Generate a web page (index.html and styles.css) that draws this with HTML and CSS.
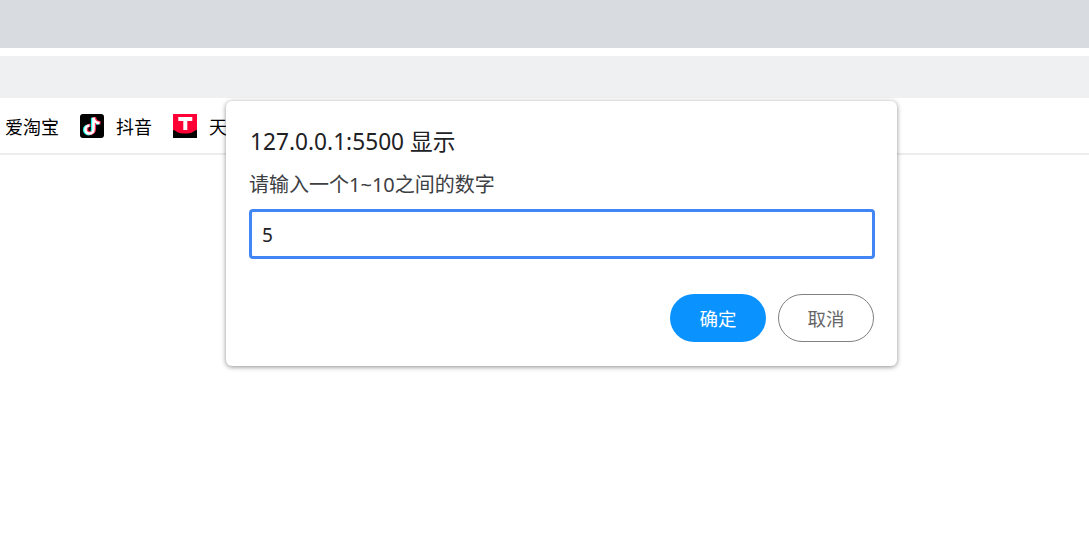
FILE: index.html
```html
<!doctype html>
<html lang="zh-CN">
  <head>
    <meta charset="utf-8">
    <title>127.0.0.1:5500</title>
    <link rel="stylesheet" href="styles.css">
  </head>
  <body>
    <div class="tabstrip"></div>
    <div class="toolbar"></div>
    <div class="bookmarks">
      <a class="bookmark">爱淘宝</a>
      <a class="bookmark">
        <svg class="favicon" viewBox="0 0 24 24">
          <rect width="24" height="24" rx="3" fill="#000"/>
          <path d="M13.500 3v12a4 4 0 1 1-4-4M13.500 3c.3 3.200 2.400 5.300 6 5.600" fill="none" stroke="#25f4ee" stroke-width="3.200" transform="translate(-1 .8)"/>
          <path d="M13.500 3v12a4 4 0 1 1-4-4M13.500 3c.3 3.200 2.400 5.300 6 5.600" fill="none" stroke="#fe2c55" stroke-width="3.200" transform="translate(1 .2)"/>
          <path d="M13.500 3v12a4 4 0 1 1-4-4M13.500 3c.3 3.200 2.400 5.300 6 5.600" fill="none" stroke="#fff" stroke-width="2.600" transform="translate(0 .5)"/>
        </svg>
        抖音
      </a>
      <a class="bookmark">
        <svg class="favicon" viewBox="0 0 24 24">
          <rect width="24" height="24" fill="#000"/>
          <path d="M0 0h24v16c-2 0-3 1-4 2-2 1-5 1.500-8 1.500s-6-.5-8-1.500c-1-1-2-2-4-2z" fill="#ff0036"/>
          <path d="M5.300 3h14v4h-5V16h-4V7h-5z" fill="#fff"/>
        </svg>
        天
      </a>
    </div>

    <div class="dialog">
      <h2 class="dialog-title">127.0.0.1:5500 显示</h2>
      <p class="dialog-msg">请输入一个1~10之间的数字</p>
      <div class="dialog-input">5</div>
      <div class="dialog-buttons">
        <button class="btn btn-ok">确定</button>
        <button class="btn btn-cancel">取消</button>
      </div>
    </div>
  </body>
</html>
```

FILE: styles.css
```css
* {
  box-sizing: border-box;
}
body {
  margin: 0;
  height: 534px;
  overflow: hidden;
  position: relative;
  background: white;
  font-family: "Noto Sans", "Noto Sans CJK SC", sans-serif;
}
.tabstrip {
  height: 48px;
  background: #d8dbe0;
}
.toolbar {
  height: 42px;
  margin-top: 8px;
  background: #eff0f2;
}
.bookmarks {
  height: 57px;
  display: flex;
  align-items: center;
  gap: 21px;
  padding-left: 5px;
  padding-top: 1px;
  border-bottom: 2px solid #ececec;
}
.bookmark {
  display: flex;
  align-items: center;
  gap: 12px;
  font-size: 18px;
  color: black;
}
.favicon {
  width: 24px;
  height: 24px;
}
.dialog {
  position: absolute;
  top: 101px;
  left: 226px;
  width: 671px;
  height: 265px;
  padding: 25px 22px 0 23px;
  background: white;
  border-radius: 6px;
  box-shadow: 0 1px 5px rgba(0, 0, 0, 0.45);
}
.dialog-title {
  margin: 0 0 0 1px;
  font-size: 22.7px;
  font-weight: normal;
  line-height: 32px;
  color: #202124;
}
.dialog-msg {
  margin: 13px 0 0;
  font-size: 20px;
  line-height: 27px;
  color: #3c4043;
}
.dialog-input {
  height: 50px;
  margin-top: 11px;
  padding-left: 10px;
  border: 3px solid #4285f4;
  border-radius: 4px;
  font-size: 19px;
  line-height: 46px;
  color: #202124;
}
.dialog-buttons {
  display: flex;
  justify-content: flex-end;
  gap: 12px;
  margin-top: 35px;
  padding-right: 1px;
}
.btn {
  width: 96px;
  height: 48px;
  border-radius: 24px;
  font-family: inherit;
  font-size: 18.5px;
}
.btn-ok {
  border: none;
  background: #0a93ff;
  color: white;
}
.btn-cancel {
  border: 1px solid #808080;
  background: white;
  color: #666;
}
```
